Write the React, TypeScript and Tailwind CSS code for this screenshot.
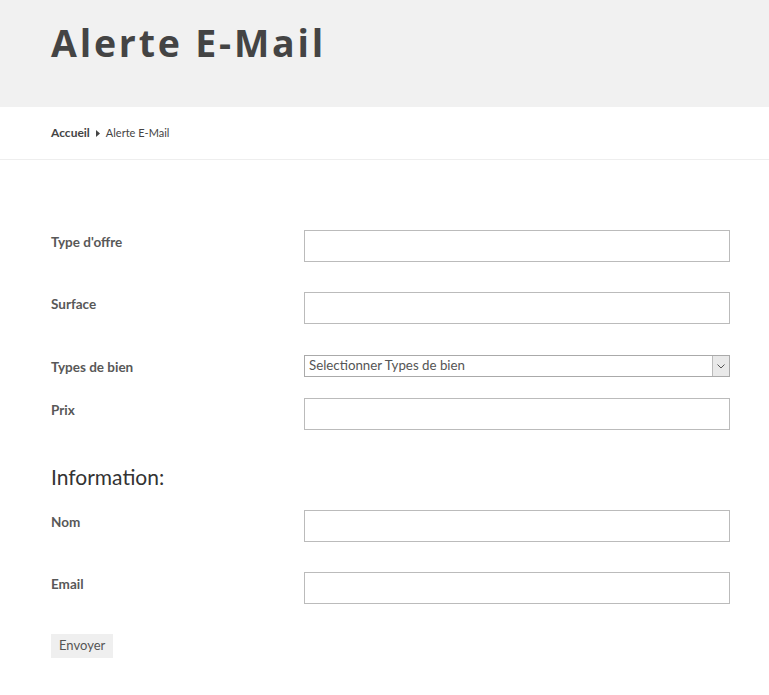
import React from 'react';

const font = { fontFamily: 'Lato, "Noto Sans", sans-serif' };

const Field: React.FC<{ label: string; className?: string; children: React.ReactNode }> = ({ label, className, children }) => (
  <div className={`flex items-start ${className ?? ''}`}>
    <label className="w-[253px] shrink-0 pt-[4px] leading-[16px] text-[13.5px] font-bold text-[#585858]">{label}</label>
    {children}
  </div>
);

const TextInput: React.FC = () => (
  <input type="text" className="w-[426px] shrink-0 h-[32px] border border-[#bbb] bg-white outline-none" />
);

const App: React.FC = () => {
  return (
    <div className="min-h-[695px] bg-white text-[#444]" style={font}>
      <div className="h-[107px] bg-[#f1f1f1] px-[51px] pt-[20px]">
        <h1 className="text-[37.5px] font-bold tracking-[2.8px] text-[#444] leading-[46px] font-['Open_Sans',sans-serif]">
          Alerte E-Mail
        </h1>
      </div>

      <div className="h-[53px] border-b border-[#eee] px-[51px] flex items-center">
        <nav className="flex items-center text-[#444]">
          <span className="font-bold text-[12px]">Accueil</span>
          <svg className="mx-[6px]" width="4" height="7" viewBox="0 0 4 7">
            <path d="M0 0 L4 3.5 L0 7 Z" fill="#444" />
          </svg>
          <span className="text-[11px]">Alerte E-Mail</span>
        </nav>
      </div>

      <form className="pl-[51px] pr-[39px] pt-[70px]">
        <Field label="Type d'offre" className="mb-[30px]">
          <TextInput />
        </Field>
        <Field label="Surface" className="mb-[31px]">
          <TextInput />
        </Field>
        <Field label="Types de bien" className="mb-[21px]">
          <div className="w-[426px] shrink-0 h-[22px] border border-[#aaa] bg-white flex items-center justify-between">
            <span className="pl-[4px] text-[13.3px] text-[#555]">Selectionner Types de bien</span>
            <span className="w-[17px] h-[20px] bg-[#e9e9e9] border-l border-[#bbb] flex items-center justify-center">
              <svg width="8" height="5" viewBox="0 0 8 5">
                <path d="M0.5 0.5 L4 4 L7.5 0.5" fill="none" stroke="#555" strokeWidth="1" />
              </svg>
            </span>
          </div>
        </Field>
        <Field label="Prix" className="mb-[34px]">
          <TextInput />
        </Field>

        <h2 className="text-[21px] text-[#333] leading-[26px] mb-[20px]">Information:</h2>

        <Field label="Nom" className="mb-[30px]">
          <TextInput />
        </Field>
        <Field label="Email" className="mb-[30px]">
          <TextInput />
        </Field>

        <button type="button" className="block h-[24px] px-[8px] bg-[#efefef] text-[13px] text-[#555]">
          Envoyer
        </button>
      </form>
    </div>
  );
};

export default App;
